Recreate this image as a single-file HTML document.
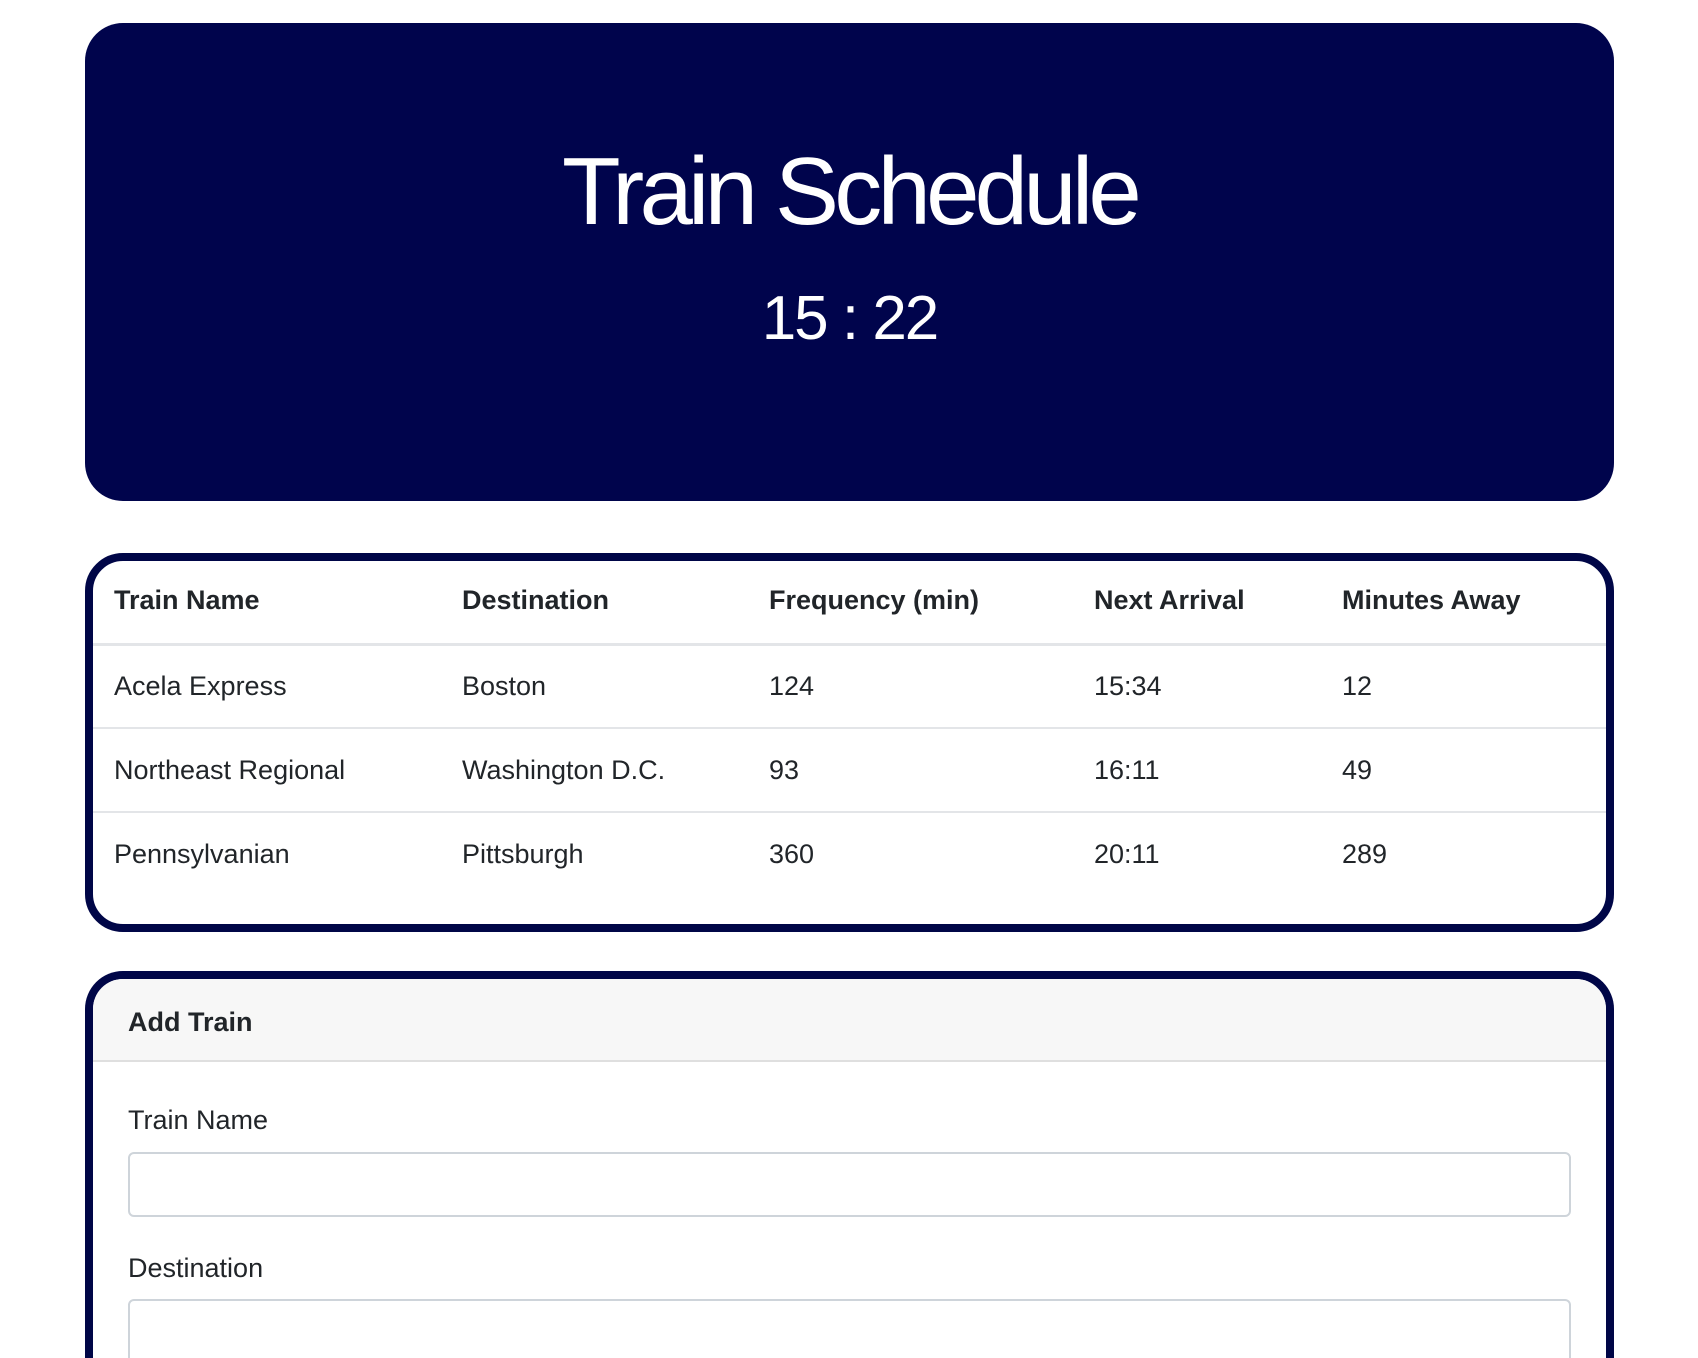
<!DOCTYPE html>
<html style="width:1698px;height:1358px;overflow:hidden"><head><style>
*{box-sizing:border-box;margin:0;padding:0}
body{width:1698px;height:1358px;overflow:hidden;background:#fff;font-family:"Liberation Sans",sans-serif;color:#212529;position:relative}
.hdr{position:absolute;left:85px;top:23px;width:1529px;height:478px;background:#00044c;border-radius:38px;color:#fff;text-align:center}
.t1{position:absolute;left:0;right:0;top:115px;font-size:96px;letter-spacing:-4.8px;line-height:108px}
.t2{position:absolute;left:0;right:0;top:261px;font-size:62px;letter-spacing:-2px;line-height:70px}
.card{position:absolute;left:85px;width:1529px;border:8px solid #000647;border-radius:38px;overflow:hidden;background:#fff}
.c1{top:553px;height:379px}
.c2{top:971px;height:387px;border-bottom:none;border-radius:38px 38px 0 0}
.row{position:absolute;left:0;right:0;font-size:27px}
.row span{position:absolute}
.line{position:absolute;left:0;right:0;height:2px;background:#e3e5e8}
.b{font-weight:bold}
.inp{position:absolute;left:35px;right:35px;height:65px;border:2px solid #ced4da;border-radius:6px}
</style></head><body>
<div class="hdr"><div class="t1">Train Schedule</div><div class="t2">15 : 22</div></div>
<div class="card c1">
 <div class="row b" style="top:24px"><span style="left:21px">Train Name</span><span style="left:369px">Destination</span><span style="left:676px">Frequency (min)</span><span style="left:1001px">Next Arrival</span><span style="left:1249px">Minutes Away</span></div>
 <div class="line" style="top:82px;height:3px"></div>
 <div class="row" style="top:110px"><span style="left:21px">Acela Express</span><span style="left:369px">Boston</span><span style="left:676px">124</span><span style="left:1001px">15:34</span><span style="left:1249px">12</span></div>
 <div class="line" style="top:166px"></div>
 <div class="row" style="top:194px"><span style="left:21px">Northeast Regional</span><span style="left:369px">Washington D.C.</span><span style="left:676px">93</span><span style="left:1001px">16:11</span><span style="left:1249px">49</span></div>
 <div class="line" style="top:250px"></div>
 <div class="row" style="top:278px"><span style="left:21px">Pennsylvanian</span><span style="left:369px">Pittsburgh</span><span style="left:676px">360</span><span style="left:1001px">20:11</span><span style="left:1249px">289</span></div>
</div>
<div class="card c2">
 <div style="position:absolute;left:0;right:0;top:0;height:83px;background:#f7f7f7;border-bottom:2px solid #dfdfdf"></div>
 <div class="row b" style="top:28px"><span style="left:35px">Add Train</span></div>
 <div class="row" style="top:126px"><span style="left:35px">Train Name</span></div>
 <div class="inp" style="top:173px"></div>
 <div class="row" style="top:274px"><span style="left:35px">Destination</span></div>
 <div class="inp" style="top:320px"></div>
</div>
</body></html>
